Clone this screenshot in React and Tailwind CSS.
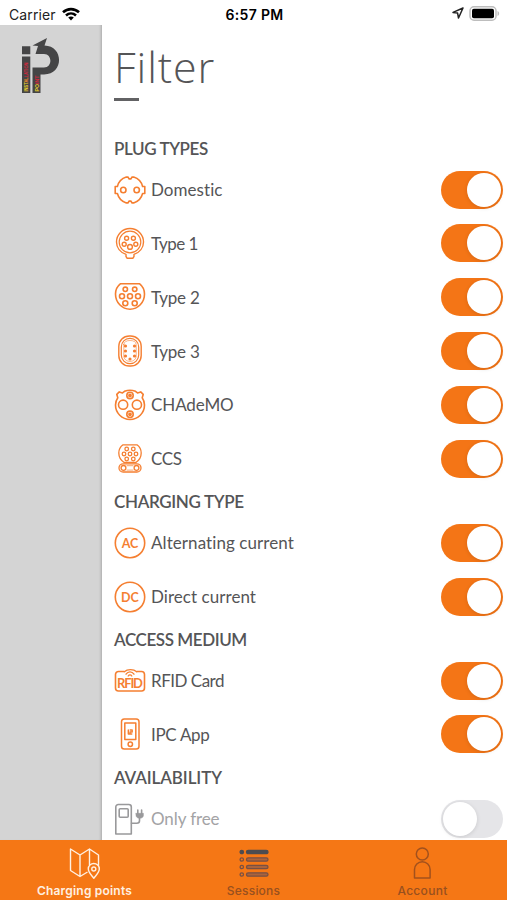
import React from "react";

const iconProps = {
  width: 32,
  height: 32,
  viewBox: "0 0 32 32",
  fill: "none",
  stroke: "#f57f31",
  strokeWidth: 1.6,
  strokeLinejoin: "round",
  strokeLinecap: "round",
};

// Small contact pins of a plug face
const Pins = ({ points, r }) =>
  points.map(([x, y]) => <circle key={`${x}-${y}`} cx={x} cy={y} r={r} />);

const DomesticIcon = () => (
  <svg {...iconProps}>
    <path d="M3.400 12.500A13.300 13.300 0 0 1 12.300 3.100h1.800l.9 1.800h2l.9-1.800h1.800a13.300 13.300 0 0 1 8.900 9.400h2.200v7h-2.200a13.300 13.300 0 0 1-8.900 9.400h-1.800l-.9-1.800h-2l-.9 1.800h-1.800a13.300 13.300 0 0 1-8.900-9.400H1.200v-7Z" />
    <Pins points={[[9.300, 16], [22.700, 16]]} r={2.700} />
  </svg>
);

const Type1Icon = () => (
  <svg {...iconProps} strokeWidth="1.400">
    <path d="M12 27.300c-5.700-1.700-9.500-6.500-9.500-12.300C2.500 7.500 8.500 1.500 16 1.500S29.500 7.500 29.500 15c0 5.800-3.800 10.600-9.500 12.300v2.200l-1.200 1.800h-5.600L12 29.500Z" />
    <circle cx="16" cy="15" r="10.800" strokeWidth="1.200" />
    <Pins points={[[12.600, 11.300], [19.400, 11.300], [10.200, 17.200], [21.800, 17.200]]} r={2} />
    <circle cx="16" cy="19.900" r="2.400" />
  </svg>
);

const Type2Icon = () => (
  <svg {...iconProps}>
    <path d="M6.300 2.800h19.400c3.100 2.500 4.800 6.200 4.800 10.200C30.500 21.500 24 28.200 16 28.200S1.500 21.500 1.500 13c0-4 1.700-7.700 4.800-10.200Z" />
    <Pins points={[[11.300, 8.300], [20.700, 8.300]]} r={2.200} />
    <Pins points={[[8, 15.200], [16, 15.200], [24, 15.200], [11.300, 22.200], [20.700, 22.200]]} r={2.500} />
  </svg>
);

const Type3Icon = () => (
  <svg {...iconProps} strokeWidth="1.400">
    <rect x="4.800" y="1" width="22.400" height="30" rx="10.500" />
    <rect x="7.300" y="3.400" width="17.400" height="25.200" rx="8.500" strokeWidth="1.200" />
    <path d="M9.800 9.500V21c0 3 2.700 5.400 6.200 5.400s6.200-2.400 6.200-5.400V9.500C22 6.800 19.500 5.500 16 5.500S10 6.800 9.800 9.500Z" strokeWidth=".6" />
    <g fill="#f57f31" stroke="none">
      <Pins points={[[11.500, 11], [11.500, 16], [11.500, 21], [20.500, 11], [20.500, 16], [20.500, 21], [16, 24]]} r={1.600} />
    </g>
  </svg>
);

const ChademoIcon = () => (
  <svg {...iconProps}>
    <path d="M10.500 2.300c3.500-1.400 7.500-1.400 11 0l2 1.600 3.200-1 2.500 2.500-1 3.300c1.500 2.100 2.300 4.600 2.300 7.300 0 8-6.500 14.500-14.500 14.500S1.500 24 1.500 16c0-2.700.8-5.200 2.300-7.300l-1-3.300 2.500-2.500 3.200 1Z" />
    <Pins points={[[9.100, 15.700], [22.900, 15.700]]} r={4.600} />
    <Pins points={[[16, 6.500], [16, 25.300]]} r={3.200} />
    <g fill="#f57f31">
      <Pins points={[[16, 6.500], [16, 25.300]]} r={1.100} />
    </g>
  </svg>
);

const CcsIcon = () => (
  <svg {...iconProps} strokeWidth="1.300">
    <path d="M9 1.800h14c2.700 2 4.200 5 4.200 8.200 0 4-2.200 7.400-5.300 9.500H10.100c-3.100-2.100-5.300-5.500-5.300-9.500C4.800 6.800 6.300 3.800 9 1.800Z" />
    <Pins points={[[12.700, 6], [19.300, 6], [10, 11], [16, 11], [22, 11], [12.700, 16], [19.300, 16]]} r={1.800} />
    <rect x="5" y="20.800" width="22" height="8.200" rx="4.100" />
    <Pins points={[[9.500, 24.900], [22.500, 24.900]]} r={2.400} />
    <path d="M13 22.700h6M13 27.100h6" strokeWidth=".7" />
  </svg>
);

const CurrentIcon = ({ label }) => (
  <svg {...iconProps}>
    <circle cx="16" cy="16" r="14.700" />
    <text x="16" y="20.500" textAnchor="middle" fill="#f57f31" stroke="none" fontSize="12.500" fontWeight="700" fontFamily="Lato, sans-serif">
      {label}
    </text>
  </svg>
);

const RfidIcon = () => (
  <svg {...iconProps}>
    <path d="M10 6.500H4.500a3 3 0 0 0-3 3V23a3 3 0 0 0 3 3h23a3 3 0 0 0 3-3V9.500a3 3 0 0 0-3-3H23" />
    <path d="M12 9.200c2-3 6-3 8 0M14.200 11c.9-1.500 2.700-1.500 3.600 0M10.300 6.800C13.500 3.800 19.500 3.800 22.700 6.800" strokeWidth="1.300" />
    <text x="16" y="23.300" textAnchor="middle" textLength="26" fill="#f57f31" stroke="none" fontSize="13" fontWeight="700" fontFamily="Lato, sans-serif">
      RFID
    </text>
  </svg>
);

const PhoneIcon = () => (
  <svg {...iconProps} strokeWidth="1.500">
    <rect x="7.500" y="1" width="17.500" height="30" rx="2.800" />
    <path d="M10.800 5h11v16.500h-11Z" />
    <circle cx="16.300" cy="26.300" r="2.200" />
    <path d="M14.300 12v3.500M16 14v2M16.200 12h2v2h-2M14.300 16h3.500" strokeWidth="1.400" />
  </svg>
);

const StationIcon = () => (
  <svg {...iconProps} stroke="#99999b">
    <path d="M1.800 31V4A2.500 2.500 0 0 1 4.300 1.500h10.500a2.500 2.500 0 0 1 2.500 2.500v27Z" />
    <rect x="5.200" y="5.800" width="9" height="8.400" rx="1" />
    <path d="M17.500 20.300h5.300c1.700 0 2.700-1 2.700-2.500V15M23.800 7v4M27.600 7v4" />
    <path d="M22 10.300h7.400v2.200c-.2 1.800-1.500 2.800-3.700 2.800s-3.500-1-3.700-2.800Z" fill="#99999b" strokeWidth=".5" />
  </svg>
);

const sections = [
  {
    title: "PLUG TYPES",
    tracking: "tracking-[-0.4px]",
    items: [
      { label: "Domestic", icon: <DomesticIcon />, on: true, tracking: "tracking-[0.05px]" },
      { label: "Type 1", icon: <Type1Icon />, on: true, tracking: "tracking-[-0.55px]" },
      { label: "Type 2", icon: <Type2Icon />, on: true, tracking: "tracking-[-0.25px]" },
      { label: "Type 3", icon: <Type3Icon />, on: true, tracking: "tracking-[-0.25px]" },
      { label: "CHAdeMO", icon: <ChademoIcon />, on: true, tracking: "tracking-[-0.1px]" },
      { label: "CCS", icon: <CcsIcon />, on: true, tracking: "tracking-[-0.4px]" },
    ],
  },
  {
    title: "CHARGING TYPE",
    tracking: "tracking-[-0.35px]",
    items: [
      { label: "Alternating current", icon: <CurrentIcon label="AC" />, on: true, tracking: "tracking-[0.08px]" },
      { label: "Direct current", icon: <CurrentIcon label="DC" />, on: true, tracking: "tracking-[0.05px]" },
    ],
  },
  {
    title: "ACCESS MEDIUM",
    tracking: "tracking-[-0.42px]",
    items: [
      { label: "RFID Card", icon: <RfidIcon />, on: true, tracking: "tracking-[-0.5px]" },
      { label: "IPC App", icon: <PhoneIcon />, on: true, tracking: "tracking-[-0.3px]" },
    ],
  },
  {
    title: "AVAILABILITY",
    tracking: "tracking-[-0.1px]",
    items: [{ label: "Only free", icon: <StationIcon />, on: false, tracking: "tracking-[-0.1px]" }],
  },
];

function Toggle({ on }) {
  return (
    <button
      role="switch"
      aria-checked={on}
      className={`flex h-[38px] w-[62px] shrink-0 items-center rounded-full px-[2px] ${
        on ? "justify-end bg-[#f47516]" : "justify-start bg-[#e5e5e8]"
      }`}
    >
      <span className="size-[34px] rounded-full bg-white shadow-[0_1px_4px_rgba(0,0,0,0.12)]" />
    </button>
  );
}

function StatusBar() {
  return (
    <header className="grid h-[25px] shrink-0 grid-cols-3 items-center bg-white pl-[9px] pr-[7px] text-black">
      <div className="flex items-center gap-[6px] pt-[3px]">
        <span className="text-[14px] tracking-[0.1px] text-[#222]">Carrier</span>
        <svg width="18" height="14" viewBox="0 0 18 14" fill="none" stroke="#000" strokeWidth="2.600">
          <path d="M1 5.300c4.600-4.300 11.400-4.300 16 0M4 8.500c2.900-2.600 7.100-2.600 10 0" />
          <path d="M9 13.500 6.200 10.600c1.600-1.400 4-1.400 5.600 0Z" fill="#000" stroke="none" />
        </svg>
      </div>
      <span className="pt-[3px] text-center text-[14px] font-semibold tracking-[0.35px]">6:57 PM</span>
      <div className="flex items-center justify-end gap-[5px] pt-[1px]">
        <svg width="12" height="12" viewBox="0 0 12 12" fill="none" stroke="#222" strokeWidth="1.500" strokeLinejoin="round">
          <path d="M11 1 1 5.400l4.600.7L6.500 11Z" />
        </svg>
        <svg width="31" height="15" viewBox="0 0 31 15">
          <rect x="1" y=".8" width="26" height="13.400" rx="4" fill="#fff" stroke="#bdbdbd" strokeWidth="1.500" />
          <rect x="3" y="2.800" width="22" height="9.400" rx="1.800" fill="#000" />
          <path d="M28.500 5v5c2.200-.8 2.200-4.200 0-5Z" fill="#bdbdbd" />
        </svg>
      </div>
    </header>
  );
}

function Logo() {
  return (
    <svg width="38" height="56" viewBox="0 0 38 56">
      <g fill="#454546">
        <path d="M0 8.300h8.300v8H0ZM0 18.500h8.300V55H0Z" />
        <path d="M10.500 29.500H22c8.500 0 8.500-13.500 0-13.500h-8.500L16 8l-5.500-.5L25 0l-2.500 7.500c19.500.5 19.500 29-.5 29h-3.500V55h-8Z" />
      </g>
      <g fontFamily="Liberation Sans, sans-serif" fontSize="6" fontWeight="700">
        <text transform="translate(6.300 53.500) rotate(-90)" textLength="29" lengthAdjust="spacingAndGlyphs">
          <tspan fill="#ead229">INST</tspan>
          <tspan fill="#ef8b28">AL</tspan>
          <tspan fill="#d7283d">LATION</tspan>
        </text>
        <text transform="translate(16.700 53.500) rotate(-90)" textLength="16" lengthAdjust="spacingAndGlyphs">
          <tspan fill="#ead229">PO</tspan>
          <tspan fill="#d7283d">INT</tspan>
        </text>
      </g>
    </svg>
  );
}

function TabBar() {
  return (
    <nav className="grid h-[60px] shrink-0 grid-cols-3 bg-[#f57715] text-[12px] font-medium leading-[14px] text-[#98501f]">
      <div className="flex flex-col items-center pt-[7px] text-[#fff0e2]">
        <svg width="32" height="32" viewBox="0 0 32 32" fill="none" stroke="#fff0e2" strokeWidth="1.400" strokeLinejoin="round">
          <path d="M1.500 2l9.500 6v21.500l-9.500-6ZM11 8l9.500-6v16M20.500 2l9 6v11M11 29.500l7.500-4.500" />
          <path d="M24.800 31.300c-2.500-3.400-5.500-6.100-5.500-9.300a5.500 5.500 0 0 1 11 0c0 3.200-3 5.900-5.500 9.300Z" />
          <circle cx="24.800" cy="22" r="2" />
        </svg>
        <span className="mt-[5px] font-semibold tracking-[0.2px]">Charging points</span>
      </div>
      <div className="flex flex-col items-center pt-[7px]">
        <svg width="32" height="32" viewBox="0 0 32 32" fill="none" stroke="#785044" strokeWidth="1.300">
          <circle cx="3.800" cy="5" r="1.700" fill="#4d4c50" stroke="#4d4c50" />
          <rect x="8.500" y="3.300" width="21.500" height="3.400" rx="1.700" fill="#4d4c50" stroke="#4d4c50" />
          {[12.5, 20, 27.500].map((y) => (
            <g key={y}>
              <circle cx="3.800" cy={y} r="1.700" />
              <rect x="8.500" y={y - 1.700} width="21.500" height="3.400" rx="1.700" fill="#aa633c" />
            </g>
          ))}
        </svg>
        <span className="mt-[5px] tracking-[0.2px]">Sessions</span>
      </div>
      <div className="flex flex-col items-center pt-[7px]">
        <svg width="32" height="32" viewBox="0 0 32 32" fill="none" stroke="#a2511d" strokeWidth="1.500">
          <circle cx="15.300" cy="7" r="6" />
          <path d="M7.500 31V22.500a7.800 7.800 0 0 1 15.600 0V31Z" strokeLinejoin="round" />
        </svg>
        <span className="mt-[5px] tracking-[0.3px]">Account</span>
      </div>
    </nav>
  );
}

export default function App() {
  return (
    <div className="flex h-[900px] w-[507px] flex-col overflow-hidden bg-white font-['Inter',sans-serif]">
      <StatusBar />
      <div className="flex min-h-0 flex-1 overflow-hidden">
        {/* Dimmed map behind the drawer */}
        <aside className="w-[102px] shrink-0 bg-[#d4d4d4] pl-[22px] pt-[13px] shadow-[inset_-3px_0_3px_-2px_rgba(0,0,0,0.2)]">
          <Logo />
        </aside>

        <main className="min-w-0 flex-1 pl-3 pr-1 font-['Lato',sans-serif] text-[#555557] [font-variant-ligatures:none]">
          <h1 className="-ml-[1px] h-[73px] pt-[16px] pl-[1px] font-['Open_Sans',sans-serif] text-[43px] font-light leading-[52px] tracking-[0.9px]">
            Filter
          </h1>
          <div className="mb-[31.500px] h-[3px] w-[25px] bg-[#626264]" />

          {sections.map((section) => (
            <section key={section.title}>
              <h2
                className={`flex h-[30.300px] items-center pt-[2px] text-[17px] font-semibold leading-[20px] ${section.tracking}`}
              >
                {section.title}
              </h2>
              {section.items.map((item) => (
                <div key={item.label} className="flex h-[53.800px] items-center">
                  <div className="-ml-[0.500px] w-[37.500px] shrink-0">{item.icon}</div>
                  <span
                    className={`flex-1 pt-[1px] text-[17px] leading-[20px] ${item.tracking} ${
                      item.on ? "" : "text-[#a3a3a5]"
                    }`}
                  >
                    {item.label}
                  </span>
                  <Toggle on={item.on} />
                </div>
              ))}
            </section>
          ))}
        </main>
      </div>
      <TabBar />
    </div>
  );
}
